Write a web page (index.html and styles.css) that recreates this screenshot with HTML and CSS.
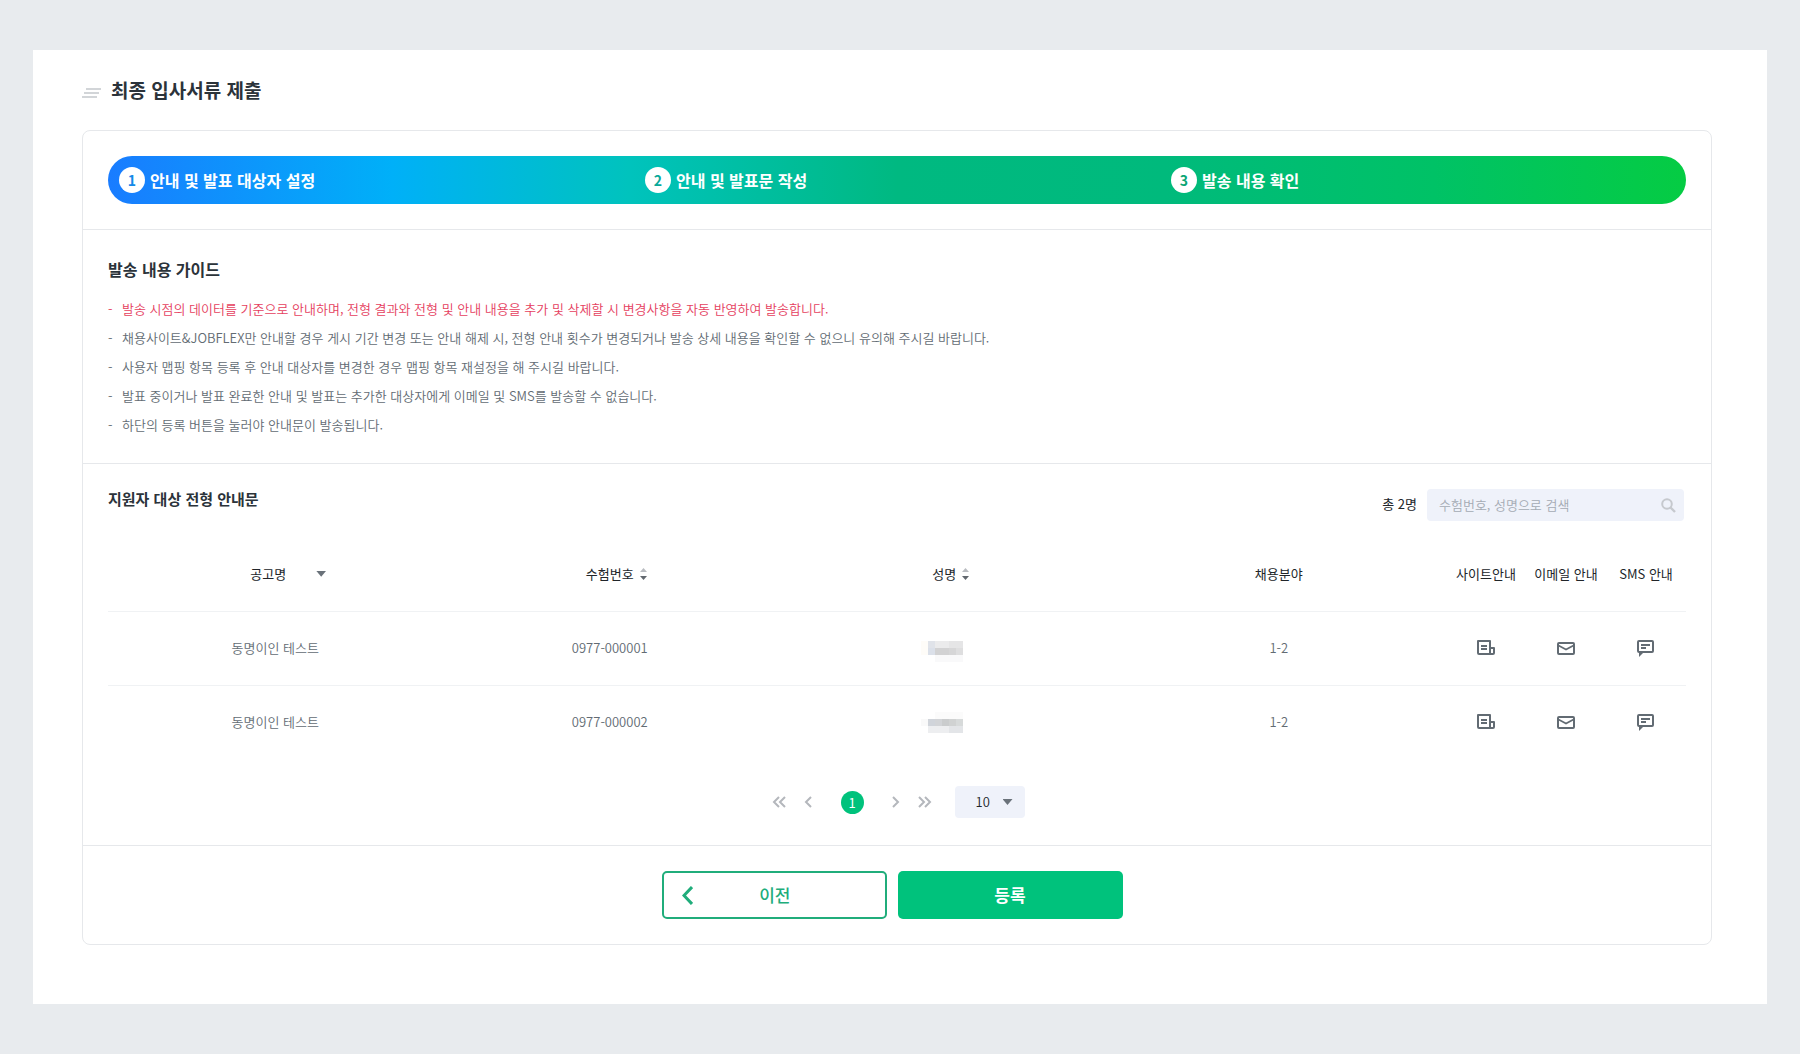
FILE: index.html
```html
<!DOCTYPE html>
<html lang="ko">
<head>
<meta charset="utf-8">
<meta name="viewport" content="width=device-width, initial-scale=1">
<title>최종 입사서류 제출</title>
<link rel="stylesheet" href="styles.css">
</head>
<body>
<svg class="sprite" aria-hidden="true">
  <symbol id="icon-site" viewBox="0 -2 18 20"><path d="M1 1H13V14H2Q1 14 1 13Z M13 8H17V13Q17 14 16 14H12" fill="none" stroke="currentColor" stroke-width="2" stroke-linejoin="round"/><path d="M4 6H10M4 9H10" fill="none" stroke="currentColor" stroke-width="2"/></symbol>
  <symbol id="icon-mail" viewBox="0 -4 18 20"><rect x="1" y="1" width="16" height="11" rx="1" fill="none" stroke="currentColor" stroke-width="2"/><path d="M1.500 3.500L9 7.500L16.500 3.500" fill="none" stroke="currentColor" stroke-width="1.600"/></symbol>
  <symbol id="icon-sms" viewBox="0 -2 18 20"><path d="M2 1H15Q16 1 16 2V11Q16 12 15 12H2Q1 12 1 11V2Q1 1 2 1Z" fill="none" stroke="currentColor" stroke-width="2"/><path d="M2 12H7L2 17Z" fill="currentColor"/><path d="M4 5H13M4 8H9" fill="none" stroke="currentColor" stroke-width="2"/></symbol>
  <symbol id="icon-sort" viewBox="0 0 7 12"><path d="M0 4L3.500 0L7 4Z" fill="#b9bcc1"/><path d="M0 8H7L3.500 12Z" fill="#62686f"/></symbol>
  <symbol id="icon-double" viewBox="0 0 14 12"><path d="M7 1L2 6L7 11M13 1L8 6L13 11" fill="none" stroke="currentColor" stroke-width="2"/></symbol>
  <symbol id="icon-single" viewBox="0 0 8 12"><path d="M7 1L2 6L7 11" fill="none" stroke="currentColor" stroke-width="2"/></symbol>
</svg>

<main class="page">
  <header class="page-header">
    <svg class="title-mark" viewBox="0 0 19 11" aria-hidden="true"><path d="M4 1H19M2 5H17M0 9H15" stroke="#d2d5d8" stroke-width="2"/></svg>
    <h1 class="page-title">최종 입사서류 제출</h1>
  </header>

  <div class="card">
    <section class="steps-area">
      <ol class="steps">
        <li class="step"><span class="step-number step-number-blue">1</span>안내 및 발표 대상자 설정</li>
        <li class="step"><span class="step-number step-number-teal">2</span>안내 및 발표문 작성</li>
        <li class="step"><span class="step-number step-number-green">3</span>발송 내용 확인</li>
      </ol>
    </section>

    <section class="guide">
      <h2 class="guide-title">발송 내용 가이드</h2>
      <ul class="guide-list">
        <li class="guide-item guide-item-alert">발송 시점의 데이터를 기준으로 안내하며, 전형 결과와 전형 및 안내 내용을 추가 및 삭제할 시 변경사항을 자동 반영하여 발송합니다.</li>
        <li class="guide-item">채용사이트&amp;JOBFLEX만 안내할 경우 게시 기간 변경 또는 안내 해제 시, 전형 안내 횟수가 변경되거나 발송 상세 내용을 확인할 수 없으니 유의해 주시길 바랍니다.</li>
        <li class="guide-item">사용자 맵핑 항목 등록 후 안내 대상자를 변경한 경우 맵핑 항목 재설정을 해 주시길 바랍니다.</li>
        <li class="guide-item">발표 중이거나 발표 완료한 안내 및 발표는 추가한 대상자에게 이메일 및 SMS를 발송할 수 없습니다.</li>
        <li class="guide-item">하단의 등록 버튼을 눌러야 안내문이 발송됩니다.</li>
      </ul>
    </section>

    <section class="applicants">
      <div class="applicants-header">
        <h2 class="applicants-title">지원자 대상 전형 안내문</h2>
        <form class="search">
          <label class="search-count" for="search-input">총 2명</label>
          <div class="search-box">
            <input class="search-input" id="search-input" type="text" placeholder="수험번호, 성명으로 검색">
            <button class="search-button" type="button" aria-label="검색"><svg class="search-icon" viewBox="0 0 15 15"><circle cx="6" cy="6" r="4.800" fill="none" stroke="currentColor" stroke-width="2"/><path d="M9.500 9.500L14 14" stroke="currentColor" stroke-width="2.400"/></svg></button>
          </div>
        </form>
      </div>

      <table class="table">
        <colgroup><col><col><col><col><col class="col-icon"><col class="col-icon"><col class="col-icon"></colgroup>
        <thead>
          <tr>
            <th scope="col"><button class="filter" type="button">공고명<span class="caret"></span></button></th>
            <th scope="col"><button class="sort" type="button">수험번호<svg class="sort-icon"><use href="#icon-sort"/></svg></button></th>
            <th scope="col"><button class="sort" type="button">성명<svg class="sort-icon"><use href="#icon-sort"/></svg></button></th>
            <th scope="col">채용분야</th>
            <th scope="col">사이트안내</th>
            <th scope="col">이메일 안내</th>
            <th scope="col">SMS 안내</th>
          </tr>
        </thead>
        <tbody>
          <tr>
            <td>동명이인 테스트</td>
            <td>0977-000001</td>
            <td><svg class="masked" viewBox="0 -6 46 27" shape-rendering="crispEdges" aria-label="가려진 성명"><path d="M0 0h7v14h-7z" fill="#fefcf8"/><path d="M7 0h7v7h-7z" fill="#e0e3e9"/><path d="M14 0h14v7h-14z" fill="#ebebec"/><path d="M28 0h14v7h-14z" fill="#e5e5e6"/><path d="M7 7h7v7h-7z" fill="#dbe0e9"/><path d="M14 7h14v7h-14z" fill="#d2d2d3"/><path d="M28 7h7v7h-7z" fill="#d6d6d7"/><path d="M35 7h7v7h-7z" fill="#dededf"/><path d="M14 14h28v7h-28z" fill="#f9f9fa"/></svg></td>
            <td>1-2</td>
            <td><button class="icon-button" type="button" aria-label="사이트안내"><svg class="icon"><use href="#icon-site"/></svg></button></td>
            <td><button class="icon-button" type="button" aria-label="이메일 안내"><svg class="icon"><use href="#icon-mail"/></svg></button></td>
            <td><button class="icon-button" type="button" aria-label="SMS 안내"><svg class="icon"><use href="#icon-sms"/></svg></button></td>
          </tr>
          <tr>
            <td>동명이인 테스트</td>
            <td>0977-000002</td>
            <td><svg class="masked" viewBox="0 -3 46 27" shape-rendering="crispEdges" aria-label="가려진 성명"><path d="M14 0h28v7h-28z" fill="#fbfbfb"/><path d="M0 7h7v7h-7z" fill="#f9f9f9"/><path d="M7 7h7v7h-7z" fill="#d0d4da"/><path d="M14 7h7v7h-7z" fill="#d2d4d7"/><path d="M21 7h7v7h-7z" fill="#cacccd"/><path d="M28 7h7v7h-7z" fill="#d0d2d2"/><path d="M35 7h7v7h-7z" fill="#d7dada"/><path d="M7 14h21v7h-21z" fill="#edeef0"/><path d="M28 14h14v7h-14z" fill="#e3e5e8"/></svg></td>
            <td>1-2</td>
            <td><button class="icon-button" type="button" aria-label="사이트안내"><svg class="icon"><use href="#icon-site"/></svg></button></td>
            <td><button class="icon-button" type="button" aria-label="이메일 안내"><svg class="icon"><use href="#icon-mail"/></svg></button></td>
            <td><button class="icon-button" type="button" aria-label="SMS 안내"><svg class="icon"><use href="#icon-sms"/></svg></button></td>
          </tr>
        </tbody>
      </table>

      <div class="pagination">
        <nav class="pages" aria-label="페이지">
          <button class="page-arrow" type="button" aria-label="처음"><svg class="arrow-double"><use href="#icon-double"/></svg></button>
          <button class="page-arrow" type="button" aria-label="이전 페이지"><svg class="arrow-single"><use href="#icon-single"/></svg></button>
          <button class="page-number" type="button" aria-current="page">1</button>
          <button class="page-arrow page-arrow-next" type="button" aria-label="다음 페이지"><svg class="arrow-single"><use href="#icon-single"/></svg></button>
          <button class="page-arrow page-arrow-next" type="button" aria-label="마지막"><svg class="arrow-double"><use href="#icon-double"/></svg></button>
        </nav>
        <div class="page-size">
          <select class="page-size-select" aria-label="페이지당 개수"><option>10</option><option>20</option><option>50</option></select>
          <span class="caret page-size-caret"></span>
        </div>
      </div>
    </section>

    <footer class="actions">
      <button class="action action-prev" type="button"><svg class="action-arrow" viewBox="0 0 11 19" aria-hidden="true"><path d="M10 1L2 9.500L10 18" fill="none" stroke="currentColor" stroke-width="3"/></svg>이전</button>
      <button class="action action-submit" type="submit">등록</button>
    </footer>
  </div>
</main>
</body>
</html>
```
FILE: styles.css
```css
* {
  box-sizing: border-box;
}

body {
  margin: 0;
  padding: 50px 33px;
  background: #e8ebee;
  color: #212529;
  font-family: "Noto Sans CJK KR", "Noto Sans", sans-serif;
  font-size: 13px;
  line-height: 20px;
}

button,
input,
select {
  margin: 0;
  padding: 0;
  border: 0;
  background: none;
  color: inherit;
  font: inherit;
}

h1,
h2,
ol,
ul {
  margin: 0;
  padding: 0;
  list-style: none;
}

svg {
  display: block;
}

.sprite {
  display: none;
}

.page {
  padding: 26px 55px 59px 49px;
  background: #fff;
}

.page-header {
  display: flex;
  align-items: flex-start;
  gap: 10px;
  height: 30px;
  margin-bottom: 24px;
}

.title-mark {
  width: 19px;
  height: 11px;
  margin-top: 12px;
}

.page-title {
  color: #2b333a;
  font-size: 19px;
  font-weight: 700;
  line-height: 28px;
}

.card {
  border: 1px solid #e6e8eb;
  border-radius: 8px;
}

/* Progress steps */
.steps-area {
  padding: 25px;
  border-bottom: 1px solid #e6e8eb;
}

.steps {
  display: grid;
  grid-template-columns: repeat(3, 1fr);
  height: 48px;
  border-radius: 24px;
  background: linear-gradient(90deg, #197cff 0%, #00b0f8 18%, #00c3bd 33%, #00b981 50%, #00ba7c 67%, #00c266 84%, #05cc43 100%);
}

.step {
  display: flex;
  align-items: center;
  gap: 5px;
  padding-left: 11px;
  color: #fff;
  font-size: 16px;
  font-weight: 700;
}

.step-number {
  width: 26px;
  height: 26px;
  border-radius: 50%;
  background: #fff;
  font-size: 14px;
  line-height: 26px;
  text-align: center;
}

.step-number-blue {
  color: #1589e8;
}

.step-number-teal {
  color: #08a99a;
}

.step-number-green {
  color: #0ba574;
}

/* Guide */
.guide {
  padding: 27px 25px 24px;
  border-bottom: 1px solid #e6e8eb;
}

.guide-title,
.applicants-title {
  color: #2b333a;
  font-weight: 700;
}

.guide-title {
  font-size: 16px;
  line-height: 24px;
}

.guide-list {
  margin-top: 13px;
}

.guide-item {
  display: flex;
  color: #626b73;
  font-weight: 350;
  line-height: 29px;
}

.guide-item::before {
  content: "-";
  flex: 0 0 14px;
}

.guide-item-alert {
  color: #e5405e;
}

/* Applicants */
.applicants {
  padding: 25px 25px 27px;
  border-bottom: 1px solid #e6e8eb;
}

.applicants-header {
  display: flex;
  justify-content: space-between;
  padding-right: 2px;
}

.applicants-title {
  font-size: 15px;
  line-height: 20px;
}

.search {
  display: flex;
  align-items: center;
  gap: 10px;
}

.search-count {
  padding-bottom: 2px;
}

.search-box {
  display: flex;
  align-items: center;
  width: 257px;
  height: 32px;
  padding: 0 8px 0 12px;
  border-radius: 4px;
  background: #eff2fa;
}

.search-input {
  flex: 1;
  min-width: 0;
  height: 32px;
  padding-bottom: 2px;
  outline: 0;
  font-weight: 350;
}

.search-input::placeholder {
  color: #a4aab3;
  opacity: 1;
}

.search-button {
  color: #c6c9ce;
}

.search-icon {
  width: 15px;
  height: 15px;
}

.table {
  width: 100%;
  margin-top: 16px;
  border-collapse: collapse;
  table-layout: fixed;
}

.col-icon {
  width: 80px;
}

.table th,
.table td {
  height: 74px;
  padding: 0;
  font-weight: 400;
  text-align: center;
  white-space: nowrap;
}

.table td {
  border-top: 1px solid #f0f2f4;
  color: #626b73;
  font-weight: 350;
}

.filter,
.sort {
  display: inline-flex;
  align-items: center;
}

.filter {
  gap: 30px;
  padding-left: 26px;
}

.sort {
  gap: 6px;
  padding-left: 13px;
}

.sort-icon {
  width: 7px;
  height: 12px;
}

.caret {
  width: 10px;
  height: 6px;
  background: #6a727a;
  clip-path: polygon(0 0, 100% 0, 50% 100%);
}

.masked {
  width: 46px;
  height: 27px;
  margin: 0 auto;
}

.icon-button {
  display: inline-flex;
  align-items: center;
  justify-content: center;
  width: 24px;
  height: 24px;
  vertical-align: middle;
}

.icon {
  width: 18px;
  height: 20px;
}

/* Pagination */
.pagination {
  display: flex;
  align-items: center;
  justify-content: center;
  gap: 23px;
  margin-top: 27px;
  padding-left: 2px;
}

.pages {
  display: flex;
  align-items: center;
  gap: 18px;
  color: #b4b7bc;
}

.page-arrow-next {
  transform: rotate(180deg);
}

.arrow-double {
  width: 14px;
  height: 12px;
}

.arrow-single {
  width: 8px;
  height: 12px;
}

.page-number {
  width: 23px;
  height: 23px;
  margin: 0 10px 0 11px;
  border-radius: 50%;
  background: #00c27c;
  color: #fff;
  line-height: 23px;
}

.page-size {
  display: flex;
  align-items: center;
  width: 70px;
  height: 32px;
  border-radius: 4px;
  background: #eff2fa;
}

.page-size-select {
  width: 100%;
  height: 32px;
  margin-right: -22px;
  padding-left: 21px;
  appearance: none;
  font-weight: 350;
}

.page-size-caret {
  pointer-events: none;
}

/* Bottom actions */
.actions {
  display: flex;
  justify-content: center;
  gap: 11px;
  padding: 25px 35px 25px 25px;
}

.action {
  display: flex;
  align-items: center;
  justify-content: center;
  width: 225px;
  height: 48px;
  border-radius: 5px;
  font-size: 17px;
  font-weight: 500;
}

.action-prev {
  padding: 0 94px 0 18px;
  justify-content: space-between;
  border: 2px solid #20ad7b;
  color: #20ad7b;
}

.action-arrow {
  width: 11px;
  height: 19px;
}

.action-submit {
  background: #00c27c;
  color: #fff;
  font-weight: 700;
}
```
